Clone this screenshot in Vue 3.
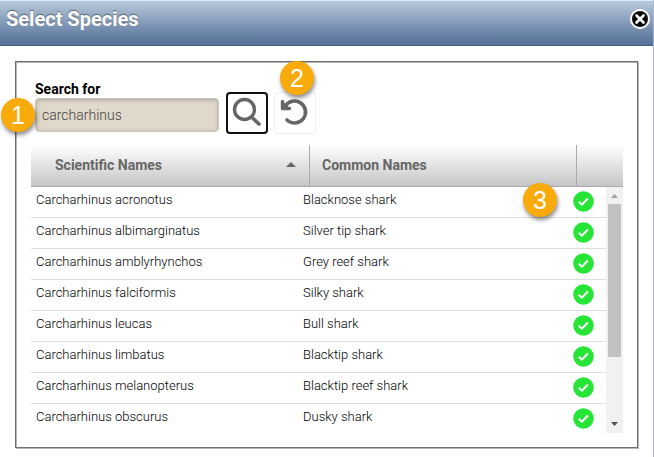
<script setup>
import { ref, computed } from 'vue'

const query = ref('carcharhinus')
const ascending = ref(true)
const species = [
  ['Carcharhinus acronotus', 'Blacknose shark'],
  ['Carcharhinus albimarginatus', 'Silver tip shark'],
  ['Carcharhinus amblyrhynchos', 'Grey reef shark'],
  ['Carcharhinus falciformis', 'Silky shark'],
  ['Carcharhinus leucas', 'Bull shark'],
  ['Carcharhinus limbatus', 'Blacktip shark'],
  ['Carcharhinus melanopterus', 'Blacktip reef shark'],
  ['Carcharhinus obscurus', 'Dusky shark']
]
const rows = computed(() => (ascending.value ? species : [...species].reverse()))
</script>

<template>
  <main class="dialog">
    <header class="titlebar">
      <h1>Select Species</h1>
      <button class="close" type="button" aria-label="Close">
        <svg viewBox="0 0 20 20" width="20" height="20">
          <circle cx="10" cy="10" r="9" fill="#0a0a0a" stroke="#fff" stroke-width="2" />
          <path d="M6.5 6.5l7 7M13.5 6.5l-7 7" stroke="#fff" stroke-width="2.6" stroke-linecap="round" />
        </svg>
      </button>
    </header>

    <section class="panel">
      <form class="search" @submit.prevent>
        <label for="query">Search for</label>
        <div class="controls">
          <div class="anchor field">
            <input id="query" v-model="query" type="text" />
            <span class="badge badge-field">1</span>
          </div>
          <button class="tool focused" type="submit" aria-label="Search">
            <svg viewBox="2 2 38 38" width="38" height="38" fill="none" stroke="#666" stroke-linecap="round">
              <circle cx="18.500" cy="17.500" r="10" stroke-width="3.400" />
              <path d="M26 25.500l7 6.500" stroke-width="3.600" />
            </svg>
          </button>
          <div class="anchor">
            <button class="tool" type="button" aria-label="Reset" @click="query = ''">
              <svg viewBox="1 1 40 40" width="40" height="40" fill="none" stroke="#666" stroke-linecap="round">
                <path d="M11 14.500A11 11 0 1 1 13 28" stroke-width="3.600" />
                <path d="M8.500 9.500V16.500H15.500" stroke-width="3.400" stroke-linejoin="round" />
                <path d="M8.500 10.500V16.500H14.500Z" fill="#666" stroke-width="2" stroke-linejoin="round" />
              </svg>
            </button>
            <span class="badge badge-reset">2</span>
          </div>
        </div>
      </form>

      <div class="grid">
        <table class="head">
          <colgroup><col /><col class="head-common" /><col class="head-pick" /></colgroup>
          <thead>
            <tr>
              <th scope="col" :aria-sort="ascending ? 'ascending' : 'descending'">
                <button class="sort" type="button" @click="ascending = !ascending">
                  Scientific Names
                  <svg viewBox="0 0 10 5" width="10" height="5"><path d="M0 5L5 0l5 5z" fill="#666" /></svg>
                </button>
              </th>
              <th scope="col">Common Names</th>
              <th></th>
            </tr>
          </thead>
        </table>
        <div class="viewport">
          <div class="list">
            <table class="body" aria-label="Species">
              <colgroup><col /><col class="col-common" /><col class="col-pick" /></colgroup>
              <tbody>
                <tr v-for="row in rows" :key="row[0]">
                  <td>{{ row[0] }}</td>
                  <td>{{ row[1] }}</td>
                  <td class="pick">
                    <button type="button" :aria-label="'Select ' + row[0]">
                      <svg viewBox="0 0 20 20" width="21" height="21">
                        <circle cx="10" cy="10" r="9.8" fill="#26e536" />
                        <path d="M5.500 10.200l3 2.800 5.700-5.800" fill="none" stroke="#fff" stroke-width="2" />
                      </svg>
                    </button>
                  </td>
                </tr>
              </tbody>
            </table>
          </div>
          <div class="scrollbar" aria-hidden="true">
            <svg class="arrow" viewBox="0 0 17 17" width="17" height="17"><path d="M5 11l3.500-4 3.500 4z" fill="#a3a3a3" /></svg>
            <span class="thumb"></span>
            <span class="track"></span>
            <svg class="arrow" viewBox="0 0 17 17" width="17" height="17"><path d="M5 6l3.500 4 3.500-4z" fill="#505050" /></svg>
          </div>
          <span class="badge badge-pick">3</span>
        </div>
      </div>
    </section>
  </main>
</template>

<style>
body {
  background: #fff;
}
</style>

<style scoped>
* {
  box-sizing: border-box;
}
.dialog {
  min-height: 100vh;
  border-right: 1px solid #a9b3d6;
  background: #fff;
  color: #000;
  font-family: Roboto, "Liberation Sans", sans-serif;
}
.titlebar {
  display: flex;
  align-items: flex-start;
  justify-content: space-between;
  height: 46px;
  padding: 7px 3px 0 6px;
  border-top: 1px solid #d9ecfb;
  border-bottom: 1px solid #3e5a80;
  background: linear-gradient(#b9cadb, #8299b8 50%, #557198);
}
h1 {
  margin: 0;
  color: #fff;
  font-size: 20px;
  line-height: 22px;
  font-weight: 700;
  text-shadow: 0 -1px 1px #55616e;
}
button {
  padding: 0;
  border: 0;
  background: none;
  color: inherit;
  font: inherit;
}
svg {
  display: block;
}
.close {
  margin-top: 1px;
}
.panel {
  margin: 15px 15px 8px;
  padding: 18px 14px 14px 15px;
  border: 1px solid #6f6f6f;
  box-shadow: 1px 1px 0 #b5b5b5, inset 1px 1px 0 #b5b5b5;
}
.search {
  padding: 0 4px;
}
label {
  display: block;
  font-size: 14px;
  line-height: 18px;
  font-weight: 700;
}
.controls {
  display: flex;
  align-items: flex-start;
  gap: 6px;
  margin-top: -6px;
}
.anchor {
  position: relative;
}
.field {
  width: 184px;
  margin: 6px 1px 0 0;
}
input {
  display: block;
  width: 100%;
  height: 34px;
  padding: 0 6px;
  border: 1px solid #c9c5bc;
  border-radius: 4px;
  outline: 0;
  background: #e0d9cb;
  box-shadow: inset 0 1px 4px #aaa59b;
  color: #444;
  font-family: inherit;
  font-size: 14px;
  font-weight: 300;
}
.tool {
  display: grid;
  place-items: center;
  width: 42px;
  height: 42px;
  border: 1px solid #efefef;
  border-radius: 4px;
  background: #fff;
}
.focused {
  border: 2px solid #111;
}
.badge {
  position: absolute;
  width: 34px;
  height: 34px;
  border-radius: 50%;
  background: #f9ab0b;
  box-shadow: 1px 3px 4px rgba(0, 0, 0, 0.45);
  color: #fff;
  font-family: "Liberation Sans", Arial, sans-serif;
  font-size: 25px;
  line-height: 34px;
  text-align: center;
}
.badge-field {
  top: 0;
  left: -34px;
}
.badge-reset {
  top: -31px;
  left: 6px;
}
.badge-pick {
  top: -4px;
  right: 66px;
}
.grid {
  margin-top: 11px;
}
table {
  width: 100%;
  border-spacing: 0;
  table-layout: fixed;
}
.head {
  background: linear-gradient(#fff, #c4c4c4);
}
.head-common {
  width: 267px;
}
.head-pick {
  width: 47px;
}
th {
  height: 42px;
  padding: 0 12px 2px;
  border-bottom: 1px solid #aaa;
  color: #666;
  font-size: 14px;
  line-height: 20px;
  font-weight: 700;
  text-align: left;
}
th:first-child {
  padding: 0 13px 2px 24px;
}
th + th {
  border-left: 1px solid #aaa;
}
.sort {
  display: flex;
  align-items: center;
  justify-content: space-between;
  width: 100%;
}
.viewport {
  display: flex;
  position: relative;
  height: 246px;
}
.list {
  flex: 1;
  overflow-y: auto;
  scrollbar-width: none;
}
.col-common {
  width: 267px;
}
.col-pick {
  width: 41px;
}
td {
  height: 31px;
  padding: 0 5px 4px;
  border-bottom: 1px solid #ddd;
  font-size: 13px;
  line-height: 20px;
  font-weight: 300;
  white-space: nowrap;
}
.pick {
  padding: 0 8px 1px;
}
.pick button {
  display: block;
}
.scrollbar {
  display: flex;
  flex-direction: column;
  width: 17px;
  background: #f1f1f1;
}
.thumb {
  flex: 153;
  margin: 0 2px;
  background: #c1c1c1;
}
.track {
  flex: 59;
}
</style>
